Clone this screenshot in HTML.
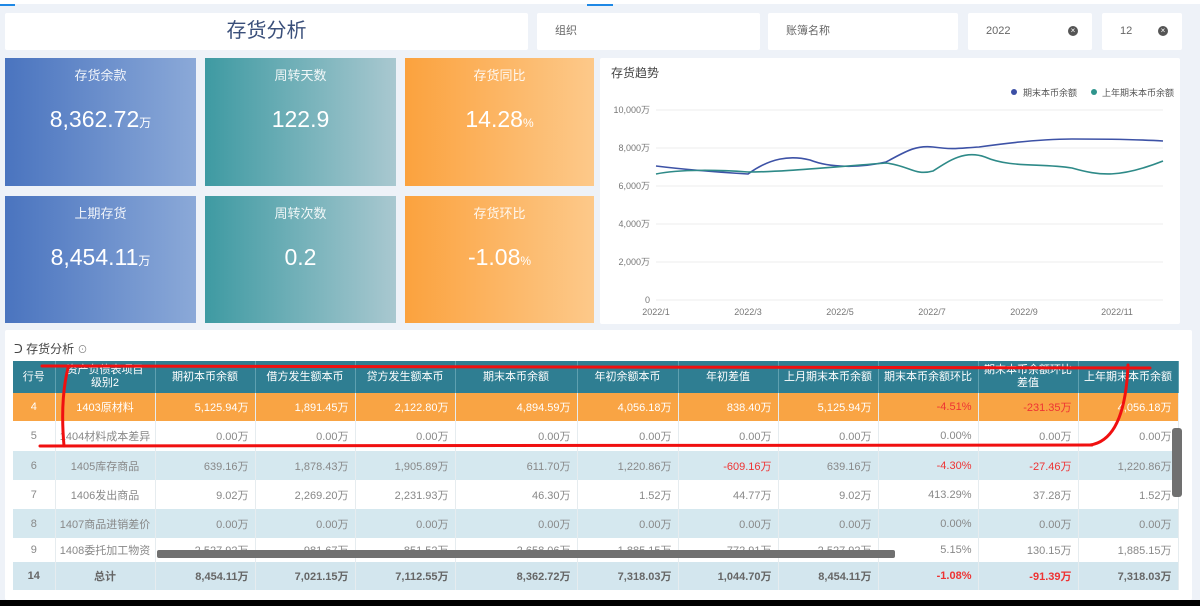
<!DOCTYPE html><html><head><meta charset="utf-8"><style>
*{margin:0;padding:0;box-sizing:border-box}
body{width:1200px;height:606px;background:#eef2f8;font-family:"Liberation Sans","Noto Sans CJK SC",sans-serif;position:relative;overflow:hidden}
.a{position:absolute}
.box{position:absolute;background:#fff;border-radius:2px}
.f{font-size:11px;color:#666;line-height:37px;padding-left:18px}
.x{position:absolute;right:14px;top:13px;width:10px;height:10px;border-radius:50%;background:#555;color:#fff;font-size:8px;line-height:10px;text-align:center}
.k{position:absolute;color:#fff;text-align:center}
.k .t{font-size:13px;margin-top:7px;opacity:.9}
.k .v{font-size:23px;margin-top:22px}
.k .v small{font-size:12px}
.b{background:linear-gradient(90deg,#4a74bf,#8ba9d8)}
.g{background:linear-gradient(90deg,#3e9aa2,#a9c8d0)}
.o{background:linear-gradient(90deg,#fba23e,#fdc98a)}
table{position:absolute;left:13px;top:361px;border-collapse:collapse;font-size:11px;color:#888;table-layout:fixed}
td{border-right:1px solid #e6ecef;text-align:right;padding-right:6px;white-space:nowrap;overflow:hidden}
th{background:#2f7e92;color:#fff;font-weight:normal;font-size:11px;height:32px;border-right:1px solid #5ea0b0;line-height:13px;white-space:nowrap;overflow:hidden}
tr.or td{background:#f9a444;color:#fff}
tr.lb td{background:#d5e8ef}
tr.tot td{background:#d3e6ee;font-weight:bold;color:#666}
td.c{text-align:center;padding:0}
tr td.r{color:#e33}
</style></head><body>
<div class="a" style="left:0;top:0;width:1200px;height:4px;background:#fff"></div>
<div class="a" style="left:0;top:4px;width:15px;height:2px;background:#1e88e5"></div>
<div class="a" style="left:587px;top:4px;width:26px;height:2px;background:#1e88e5"></div>
<div class="box" style="left:5px;top:13px;width:523px;height:37px;text-align:center;font-size:20px;line-height:37px;color:#3a4f7a">存货分析</div>
<div class="box f" style="left:537px;top:13px;width:223px;height:37px">组织</div>
<div class="box f" style="left:768px;top:13px;width:190px;height:37px">账簿名称</div>
<div class="box f" style="left:968px;top:13px;width:124px;height:37px">2022<span class="x">×</span></div>
<div class="box f" style="left:1102px;top:13px;width:80px;height:37px">12<span class="x">×</span></div>

<div class="k b" style="left:5px;top:58px;width:191px;height:128px"><div class="t">存货余款</div><div class="v">8,362.72<small>万</small></div></div>
<div class="k g" style="left:205px;top:58px;width:191px;height:128px"><div class="t">周转天数</div><div class="v">122.9</div></div>
<div class="k o" style="left:405px;top:58px;width:189px;height:128px"><div class="t">存货同比</div><div class="v">14.28<small>%</small></div></div>
<div class="k b" style="left:5px;top:196px;width:191px;height:127px"><div class="t">上期存货</div><div class="v">8,454.11<small>万</small></div></div>
<div class="k g" style="left:205px;top:196px;width:191px;height:127px"><div class="t">周转次数</div><div class="v">0.2</div></div>
<div class="k o" style="left:405px;top:196px;width:189px;height:127px"><div class="t">存货环比</div><div class="v">-1.08<small>%</small></div></div>

<div class="box" style="left:600px;top:58px;width:580px;height:266px"></div>
<svg class="a" style="left:0;top:0" width="1200" height="330">
<text x="611" y="77" font-size="12" fill="#444">存货趋势</text>
<circle cx="1014" cy="92" r="3" fill="#3b4fa5"/><text x="1023" y="96" font-size="9" fill="#555">期末本币余额</text>
<circle cx="1094" cy="92" r="3" fill="#2e948c"/><text x="1102" y="96" font-size="9" fill="#555">上年期末本币余额</text>
<g stroke="#eee" stroke-width="1"><line x1="656" y1="110" x2="1163" y2="110"/><line x1="656" y1="148" x2="1163" y2="148"/><line x1="656" y1="186" x2="1163" y2="186"/><line x1="656" y1="224" x2="1163" y2="224"/><line x1="656" y1="262" x2="1163" y2="262"/><line x1="656" y1="300" x2="1163" y2="300"/></g>
<g font-size="9" fill="#777" text-anchor="end"><text x="650" y="113">10,000万</text><text x="650" y="151">8,000万</text><text x="650" y="189">6,000万</text><text x="650" y="227">4,000万</text><text x="650" y="265">2,000万</text><text x="650" y="303">0</text></g>
<g font-size="9" fill="#777" text-anchor="middle"><text x="656" y="315">2022/1</text><text x="748" y="315">2022/3</text><text x="840" y="315">2022/5</text><text x="932" y="315">2022/7</text><text x="1024" y="315">2022/9</text><text x="1117" y="315">2022/11</text></g>
<path d="M656,166 C680,169 700,171 748,174 C770,158 790,155 810,160 C830,168 860,168 886,162 C905,152 915,145 933,147 C955,150 960,148 979,147 C1000,144 1040,139 1072,139 C1100,139 1130,139 1163,141" fill="none" stroke="#3d52a6" stroke-width="1.6"/>
<path d="M656,174 C680,169 720,170 748,172 C780,172 820,168 886,163 C910,166 915,176 933,171 C950,160 965,150 985,157 C1010,168 1040,163 1072,168 C1100,176 1120,178 1163,161" fill="none" stroke="#2e8a88" stroke-width="1.6"/>
</svg>

<div class="box" style="left:5px;top:330px;width:1187px;height:270px"></div>
<div class="a" style="left:14px;top:340px;font-size:12px;color:#444">ᑐ 存货分析 <span style="font-size:10px;color:#888">⊙</span></div>
<table>
<colgroup><col style="width:42px"><col style="width:100px"><col style="width:100px"><col style="width:100px"><col style="width:100px"><col style="width:122px"><col style="width:101px"><col style="width:100px"><col style="width:100px"><col style="width:100px"><col style="width:100px"><col style="width:100px"></colgroup>
<tr><th>行号</th><th>资产负债表项目<br>级别2</th><th>期初本币余额</th><th>借方发生额本币</th><th>贷方发生额本币</th><th>期末本币余额</th><th>年初余额本币</th><th>年初差值</th><th>上月期末本币余额</th><th>期末本币余额环比</th><th>期末本币余额环比<br>差值</th><th>上年期末本币余额</th></tr>
<tr class="or" style="height:28px"><td class="c">4</td><td class="c">1403原材料</td><td>5,125.94万</td><td>1,891.45万</td><td>2,122.80万</td><td>4,894.59万</td><td>4,056.18万</td><td>838.40万</td><td>5,125.94万</td><td class="r">-4.51%</td><td class="r">-231.35万</td><td>4,056.18万</td></tr>
<tr style="height:30px"><td class="c">5</td><td class="c">1404材料成本差异</td><td>0.00万</td><td>0.00万</td><td>0.00万</td><td>0.00万</td><td>0.00万</td><td>0.00万</td><td>0.00万</td><td>0.00%</td><td>0.00万</td><td>0.00万</td></tr>
<tr class="lb" style="height:29px"><td class="c">6</td><td class="c">1405库存商品</td><td>639.16万</td><td>1,878.43万</td><td>1,905.89万</td><td>611.70万</td><td>1,220.86万</td><td class="r">-609.16万</td><td>639.16万</td><td class="r">-4.30%</td><td class="r">-27.46万</td><td>1,220.86万</td></tr>
<tr style="height:29px"><td class="c">7</td><td class="c">1406发出商品</td><td>9.02万</td><td>2,269.20万</td><td>2,231.93万</td><td>46.30万</td><td>1.52万</td><td>44.77万</td><td>9.02万</td><td>413.29%</td><td>37.28万</td><td>1.52万</td></tr>
<tr class="lb" style="height:29px"><td class="c">8</td><td class="c">1407商品进销差价</td><td>0.00万</td><td>0.00万</td><td>0.00万</td><td>0.00万</td><td>0.00万</td><td>0.00万</td><td>0.00万</td><td>0.00%</td><td>0.00万</td><td>0.00万</td></tr>
<tr style="height:24px"><td class="c">9</td><td class="c">1408委托加工物资</td><td>2,527.92万</td><td>981.67万</td><td>851.52万</td><td>2,658.06万</td><td>1,885.15万</td><td>772.91万</td><td>2,527.92万</td><td>5.15%</td><td>130.15万</td><td>1,885.15万</td></tr>
<tr class="tot" style="height:28px"><td class="c">14</td><td class="c">总计</td><td>8,454.11万</td><td>7,021.15万</td><td>7,112.55万</td><td>8,362.72万</td><td>7,318.03万</td><td>1,044.70万</td><td>8,454.11万</td><td class="r">-1.08%</td><td class="r">-91.39万</td><td>7,318.03万</td></tr>
</table>
<div class="a" style="left:157px;top:550px;width:738px;height:8px;background:#707070;border-radius:2px"></div>
<div class="a" style="left:1172px;top:428px;width:10px;height:69px;background:#707070;border-radius:3px"></div>
<svg class="a" style="left:0;top:0" width="1200" height="606">
<g fill="none" stroke="#f01010" stroke-width="3" stroke-linecap="round">
<path d="M42,366 L1150,368"/><path d="M40,446 L1092,445"/>
<path d="M68,368 Q60,400 64,446"/>
<path d="M1090,445 Q1125,440 1128,365"/>
</g></svg>
<div class="a" style="left:0;top:600px;width:1200px;height:6px;background:#000"></div>
</body></html>
